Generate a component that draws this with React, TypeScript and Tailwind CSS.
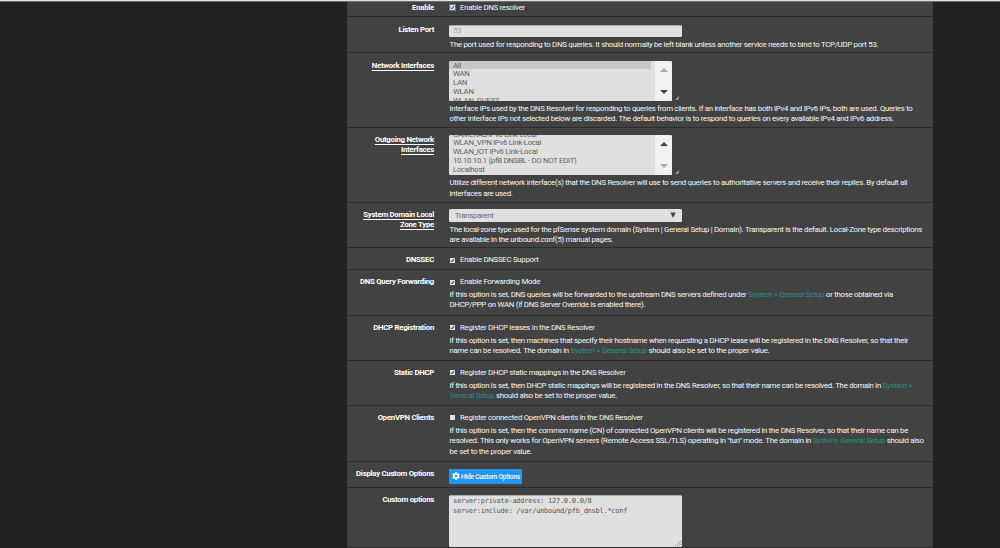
import { type ReactNode } from "react";
import clsx from "clsx";
import { FaCog } from "react-icons/fa";

export default function App() {
  return (
    <div className="flex h-[548px] w-[1000px] flex-col overflow-hidden bg-[#212121] font-['Roboto',sans-serif] text-[7.8px] leading-[10.3px] tracking-[-0.272px] text-[#f8f8f8]">
      <div className="h-[2px] shrink-0 border-b border-[#6f7171] bg-[#dfe2e2]" />
      <main className="ml-[347px] w-[586px] bg-[#424242]">
        <Row label="Enable" className="h-[15px] pt-[0.5px]">
          <Checkbox label="Enable DNS resolver" checked focused />
        </Row>
        <Row label="Listen Port" className="h-[36px] pt-[7.5px]">
          <div className="flex h-[12px] w-[233px] items-center rounded-[1.5px] border-t border-[#aaa] bg-[#e0e0e0] pl-[4px] text-[#a5a5a5]">
            53
          </div>
          <Help
            className="mt-[3px]"
            lines={[
              "The port used for responding to DNS queries. It should normally be left blank unless another service needs to bind to TCP/UDP port 53.",
            ]}
          />
        </Row>
        <Row label="Network Interfaces" underlined className="h-[75px] pt-[7.5px]">
          <ListBox
            options={["All", "WAN", "LAN", "WLAN", "WLAN_GUEST"]}
            selected="All"
            atTop
          />
          <Help
            className="mt-[3px]"
            lines={[
              "Interface IPs used by the DNS Resolver for responding to queries from clients. If an interface has both IPv4 and IPv6 IPs, both are used. Queries to",
              "other interface IPs not selected below are discarded. The default behavior is to respond to queries on every available IPv4 and IPv6 address.",
            ]}
          />
        </Row>
        <Row
          label={
            <>
              Outgoing Network
              <br />
              Interfaces
            </>
          }
          underlined
          className="h-[75px] pt-[6.5px]"
        >
          <ListBox
            options={[
              "CAMERAS IPv6 Link-Local",
              "WLAN_VPN IPv6 Link-Local",
              "WLAN_IOT IPv6 Link-Local",
              "10.10.10.1 (pfB DNSBL - DO NOT EDIT)",
              "Localhost",
            ]}
          />
          <Help
            className="mt-[3.9px]"
            lines={[
              "Utilize different network interface(s) that the DNS Resolver will use to send queries to authoritative servers and receive their replies. By default all",
              "interfaces are used.",
            ]}
          />
        </Row>
        <Row
          label={
            <>
              System Domain Local
              <br />
              Zone Type
            </>
          }
          underlined
          className="h-[45px] pt-[6.6px]"
        >
          <div className="-mt-[0.6px] flex h-[12.5px] w-[233px] items-center justify-between rounded-[1.5px] bg-[#e0e0e0] pl-[6px] pr-[6px] pt-px text-[#666]">
            Transparent
            <svg viewBox="0 0 6 6" className="-mt-px size-[6px]" fill="#444">
              <path d="M0.3 0.5H5.7L3 6Z" />
            </svg>
          </div>
          <Help
            className="mt-[3px]"
            lines={[
              "The local-zone type used for the pfSense system domain (System | General Setup | Domain). Transparent is the default. Local-Zone type descriptions",
              "are available in the unbound.conf(5) manual pages.",
            ]}
          />
        </Row>
        <Row label="DNSSEC" className="h-[22px] pt-[7px]">
          <Checkbox label="Enable DNSSEC Support" checked />
        </Row>
        <Row label="DNS Query Forwarding" className="h-[46px] pt-[7px]">
          <Checkbox label="Enable Forwarding Mode" checked />
          <Help
            className="mt-[2.9px]"
            lines={[
              <>
                If this option is set, DNS queries will be forwarded to the
                upstream DNS servers defined under{" "}
                <Link>System &gt; General Setup</Link> or those obtained via
              </>,
              "DHCP/PPP on WAN (if DNS Server Override is enabled there).",
            ]}
          />
        </Row>
        <Row label="DHCP Registration" className="h-[45px] pt-[6.5px]">
          <Checkbox label="Register DHCP leases in the DNS Resolver" checked />
          <Help
            className="mt-[3.2px]"
            lines={[
              "If this option is set, then machines that specify their hostname when requesting a DHCP lease will be registered in the DNS Resolver, so that their",
              <>
                name can be resolved. The domain in{" "}
                <Link>System &gt; General Setup</Link> should also be set to the
                proper value.
              </>,
            ]}
          />
        </Row>
        <Row label="Static DHCP" className="h-[45px] pt-[6.5px]">
          <Checkbox
            label="Register DHCP static mappings in the DNS Resolver"
            checked
          />
          <Help
            className="mt-[3.4px]"
            lines={[
              <>
                If this option is set, then DHCP static mappings will be
                registered in the DNS Resolver, so that their name can be
                resolved. The domain in <Link>System &gt;</Link>
              </>,
              <>
                <Link>General Setup</Link> should also be set to the proper
                value.
              </>,
            ]}
          />
        </Row>
        <Row label="OpenVPN Clients" className="h-[56px] pt-[6.5px]">
          <Checkbox label="Register connected OpenVPN clients in the DNS Resolver" />
          <Help
            className="mt-[3.2px]"
            lines={[
              "If this option is set, then the common name (CN) of connected OpenVPN clients will be registered in the DNS Resolver, so that their name can be",
              <>
                resolved. This only works for OpenVPN servers (Remote Access
                SSL/TLS) operating in "tun" mode. The domain in{" "}
                <Link>System: General Setup</Link> should also
              </>,
              "be set to the proper value.",
            ]}
          />
        </Row>
        <Row label="Display Custom Options" className="h-[26px] pt-[6.5px]">
          <button className="flex h-[15px] w-[73px] items-center rounded-[1px] bg-[#2196f3] pl-[3px] text-[6.6px] font-medium tracking-[-0.2px] text-white">
            <FaCog className="mr-[1px] size-[8px] shrink-0" />
            <span className="whitespace-nowrap pt-[2px]">
              Hide Custom Options
            </span>
          </button>
        </Row>
        <Row label="Custom options" className="h-[60px] pt-[6.5px]">
          <div className="relative h-[52.5px] w-[233px] whitespace-pre rounded-[1.5px] border-t border-[#aaa] bg-[#e0e0e0] pl-[4px] font-['DejaVu_Sans_Mono',monospace] text-[7px] tracking-[-0.255px] text-[#555]">
            {"server:private-address: 127.0.0.0/8\nserver:include: /var/unbound/pfb_dnsbl.*conf"}
            <svg
              viewBox="0 0 7 7"
              className="absolute bottom-[0.5px] right-0 size-[7px]"
              stroke="#777"
              strokeWidth="0.7"
            >
              <path d="M0.5 6.5L6.5 0.5M3.5 6.5L6.5 3.5" />
            </svg>
          </div>
        </Row>
      </main>
    </div>
  );
}

const Row = ({
  label,
  underlined,
  className,
  children,
}: {
  label: ReactNode;
  underlined?: boolean;
  className: string;
  children: ReactNode;
}) => (
  <div className={clsx("flex border-b border-[#2c2c2c]", className)}>
    <div className="w-[87px] shrink-0 whitespace-nowrap text-right font-bold text-white">
      <span
        className={clsx(
          underlined && "underline decoration-1 underline-offset-[1.5px]",
        )}
      >
        {label}
      </span>
    </div>
    <div className="ml-[15px] min-w-0">{children}</div>
  </div>
);

const Help = ({
  lines,
  className,
}: {
  lines: ReactNode[];
  className?: string;
}) => (
  <div className={clsx("pl-[0.5px]", className)}>
    {lines.map((line, i) => (
      <p key={i} className="whitespace-nowrap">
        {line}
      </p>
    ))}
  </div>
);

const Link = ({ children }: { children: ReactNode }) => (
  <a className="text-[#1a9686]">{children}</a>
);

const Checkbox = ({
  label,
  checked,
  focused,
}: {
  label: string;
  checked?: boolean;
  focused?: boolean;
}) => (
  <label className="flex h-[10.3px] items-center whitespace-nowrap">
    <span
      className={clsx(
        "ml-[1px] mr-[5px] flex size-[5px] items-center justify-center bg-[#e4e4e4]",
        focused && "ring-1 ring-[#5078b8]",
      )}
    >
      {checked && (
        <svg
          viewBox="0 0 5 5"
          className="size-[5px]"
          fill="none"
          stroke="#222"
          strokeWidth="1"
        >
          <path d="M0.9 2.6L2 3.8L4.1 1" />
        </svg>
      )}
    </span>
    {label}
  </label>
);

const ListBox = ({
  options,
  selected,
  atTop,
}: {
  options: string[];
  selected?: string;
  atTop?: boolean;
}) => (
  <div className="flex h-[40px] items-end">
    <div className="flex h-full w-[223px] overflow-hidden rounded-[1.5px] bg-[#e0e0e0] tracking-[-0.3px] text-[#606060]">
      <div
        className={clsx(
          "flex flex-1 flex-col",
          atTop ? "justify-start" : "justify-end pb-[0.5px]",
        )}
      >
        {options.map((option) => (
          <div
            key={option}
            className={clsx(
              "mr-[4px] h-[8.9px] shrink-0 whitespace-nowrap pl-[4px] leading-[9.3px]",
              option === selected && "bg-[#c8c8c8]",
            )}
          >
            {option}
          </div>
        ))}
      </div>
      <div className="flex w-[17px] flex-col items-center justify-between bg-[#f1f1f1] py-[7px]">
        <svg
          viewBox="0 0 8 4"
          className={clsx(
            "h-[4px] w-[8px]",
            atTop ? "fill-[#a3a3a3]" : "fill-[#444]",
          )}
        >
          <path d="M0 4L4 0L8 4Z" />
        </svg>
        <svg
          viewBox="0 0 8 4"
          className={clsx(
            "h-[4px] w-[8px]",
            atTop ? "fill-[#444]" : "fill-[#a3a3a3]",
          )}
        >
          <path d="M0 0H8L4 4Z" />
        </svg>
      </div>
    </div>
    <svg viewBox="0 0 4 4" className="mb-px ml-[3px] size-[4px]" fill="#a0a0a0">
      <path d="M0 4L4 0V2.5L2.5 4Z" />
    </svg>
  </div>
);
